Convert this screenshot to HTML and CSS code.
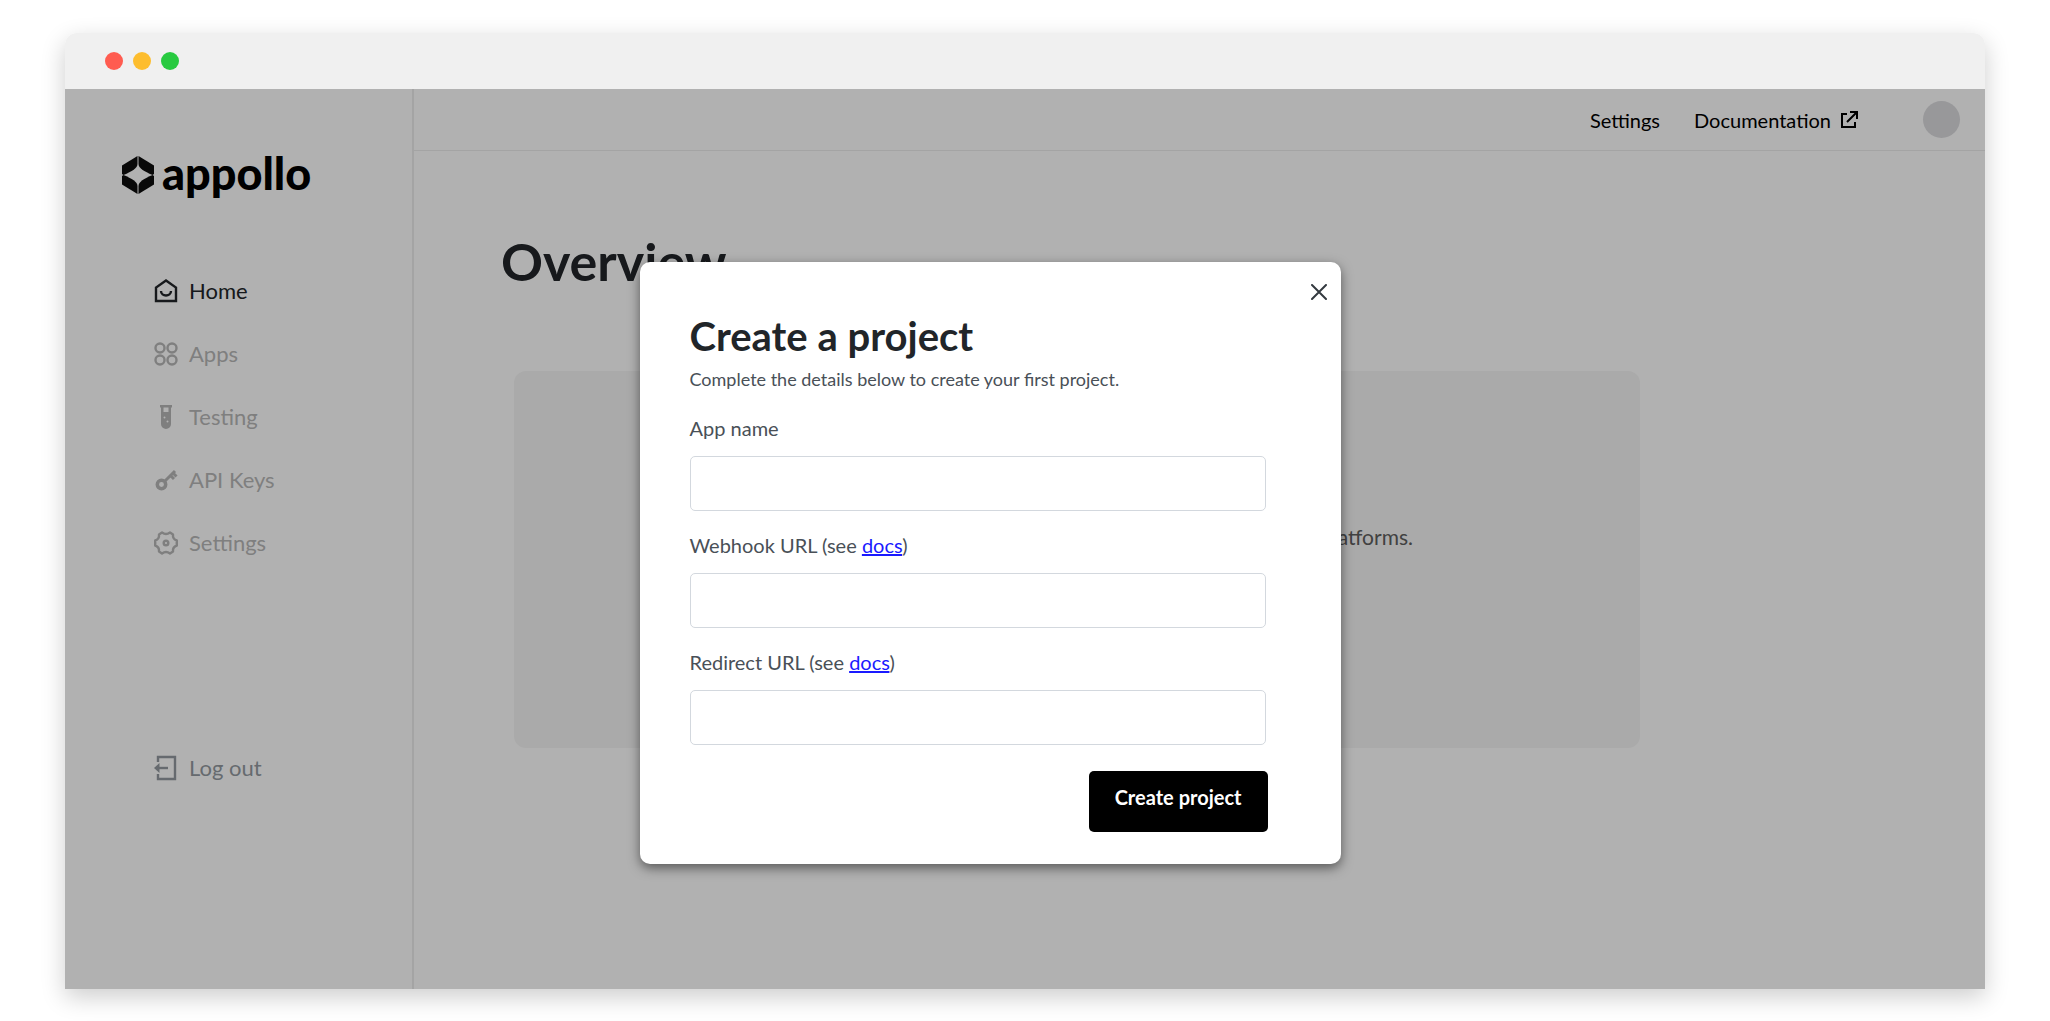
FILE: index.html
```
<!DOCTYPE html>
<html lang="en">
<head>
    <meta charset="UTF-8">
    <meta name="viewport" content="width=device-width, initial-scale=1.0">
    <title>appollo</title>
    <link rel="stylesheet" href="styles.css">
</head>
<body>

<div class="window">
    <div class="titlebar">
        <span class="dot red"></span>
        <span class="dot yellow"></span>
        <span class="dot green"></span>
    </div>

    <div class="app">
        <aside class="sidebar">
            <a href="#" class="logo">
                <svg width="32" height="38" viewBox="0 0 32 38" fill="#0c0c0c">
                    <path d="M15.500 0V8C15.500 12 10 15.500 1.500 19L0 18V9.500Z"/>
                    <path d="M16.500 0V8C16.500 12 22 15.500 30.500 19L32 18V9.500Z"/>
                    <path d="M15.500 38V30C15.500 26 10 22.500 1.500 19L0 20V28.500Z"/>
                    <path d="M16.500 38V30C16.500 26 22 22.500 30.500 19L32 20V28.500Z"/>
                </svg>
                <span>appollo</span>
            </a>

            <nav class="nav">
                <a href="#" class="active">
                    <svg width="24" height="24" viewBox="0 0 24 24" fill="none" stroke="currentColor" stroke-width="2.400">
                        <path d="M2 22V8.500L12 1.500L22 8.500V22Z"/>
                        <path d="M7 12C7 18 17 18 17 12"/>
                    </svg>
                    Home
                </a>
                <a href="#">
                    <svg width="24" height="24" viewBox="0 0 24 24" fill="none" stroke="currentColor" stroke-width="2.400">
                        <circle cx="6" cy="6" r="4.500"/>
                        <circle cx="18" cy="6" r="4.500"/>
                        <circle cx="6" cy="18" r="4.500"/>
                        <circle cx="18" cy="18" r="4.500"/>
                    </svg>
                    Apps
                </a>
                <a href="#">
                    <svg width="24" height="24" viewBox="0 0 24 24" fill="currentColor">
                        <path fill-rule="evenodd" d="M6 0H18V2.500H17V19A5 5 0 0 1 7 19V2.500H6ZM9.500 2.500V7H14.500V2.500Z"/>
                        <g fill="#fff">
                            <circle cx="10.500" cy="12.500" r="1"/>
                            <circle cx="13.500" cy="16.500" r="1"/>
                        </g>
                    </svg>
                    Testing
                </a>
                <a href="#">
                    <svg width="24" height="24" viewBox="0 0 24 24" fill="none" stroke="currentColor">
                        <circle cx="7.500" cy="16.500" r="4.200" stroke-width="3.500"/>
                        <path d="M10.500 13.500L21 3M16 7L20 11M18.500 4.500L22.500 8.500" stroke-width="3"/>
                    </svg>
                    API Keys
                </a>
                <a href="#">
                    <svg width="24" height="24" viewBox="0 0 24 24" fill="none" stroke="currentColor" stroke-width="2.400" stroke-linejoin="round">
                        <path d="M8 1.500Q12 4.500 16 1.500L19 3.500Q18.500 8 22.800 9.500V14.500Q18.500 16 19 20.500L16 22.500Q12 19.500 8 22.500L5 20.500Q5.500 16 1.200 14.500V9.500Q5.500 8 5 3.500Z"/>
                        <circle cx="12" cy="12" r="2.300"/>
                    </svg>
                    Settings
                </a>
                <a href="#" class="logout">
                    <svg width="24" height="26" viewBox="0 0 24 26" fill="none" stroke="currentColor" stroke-width="2.400">
                        <path d="M4 7V2H21V24H4V19"/>
                        <path d="M5 13H14"/>
                        <path d="M0 13L5.500 8V18Z" fill="currentColor" stroke="none"/>
                    </svg>
                    Log out
                </a>
            </nav>
        </aside>

        <div class="content">
            <header>
                <a href="#">Settings</a>
                <a href="#" class="docs-link">
                    Documentation
                    <svg width="18" height="18" viewBox="0 0 18 18" fill="none" stroke="currentColor" stroke-width="2">
                        <path d="M7 3H2V16H15V11"/>
                        <path d="M10 1H17V8M17 1L7 11"/>
                    </svg>
                </a>
                <span class="avatar"></span>
            </header>

            <main>
                <h1>Overview</h1>
                <section class="panel">
                    <p>platforms.</p>
                </section>
            </main>
        </div>

        <!-- Create project modal -->
        <div class="overlay">
            <div class="modal" role="dialog" aria-labelledby="modalTitle">
                <button type="button" class="close" aria-label="Close">
                    <svg width="16" height="16" viewBox="0 0 16 16" fill="none" stroke="currentColor" stroke-width="2" stroke-linecap="round">
                        <path d="M1 1L15 15M15 1L1 15"/>
                    </svg>
                </button>
                <h2 id="modalTitle">Create a project</h2>
                <p class="subtitle">Complete the details below to create your first project.</p>
                <form>
                    <div class="field">
                        <label for="appName">App name</label>
                        <input type="text" id="appName">
                    </div>
                    <div class="field">
                        <label for="webhookUrl">Webhook URL (see <a href="#">docs</a>)</label>
                        <input type="text" id="webhookUrl">
                    </div>
                    <div class="field">
                        <label for="redirectUrl">Redirect URL (see <a href="#">docs</a>)</label>
                        <input type="text" id="redirectUrl">
                    </div>
                    <button type="button" class="create-button">Create project</button>
                </form>
            </div>
        </div>
    </div>
</div>

</body>
</html>
```
FILE: styles.css
```
* {
    box-sizing: border-box;
}

body {
    font-family: Lato, "Liberation Sans", sans-serif;
    margin: 0;
    padding: 33px 65px 32px;
    background-color: white;
    color: #212529;
}

h1, h2, p {
    margin: 0;
}

a {
    color: inherit;
    text-decoration: none;
}

svg {
    flex-shrink: 0;
}

/* Browser window */
.window {
    display: flex;
    flex-direction: column;
    min-height: calc(100vh - 65px);
    border-radius: 12px 12px 0 0;
    box-shadow: 0 8px 24px rgba(0, 0, 0, 0.2);
}

.titlebar {
    display: flex;
    align-items: center;
    gap: 10px;
    height: 56px;
    padding: 0 40px;
    background-color: #f0f0f0;
    border-radius: 12px 12px 0 0;
}

.dot {
    width: 18px;
    height: 18px;
    border-radius: 50%;
}

.red {
    background-color: #ff5c50;
}

.yellow {
    background-color: #fdbd2e;
}

.green {
    background-color: #28ca40;
}

.app {
    position: relative;
    display: flex;
    flex: 1;
    background-color: #fefefe;
}

/* Sidebar */
.sidebar {
    width: 349px;
    border-right: 2px solid #ebebeb;
    padding-top: 60px;
}

.logo {
    display: flex;
    align-items: center;
    gap: 8px;
    height: 52px;
    padding-left: 57px;
    color: #000;
    font-size: 45px;
    font-weight: 900;
    line-height: 48px;
}

.logo span {
    padding-bottom: 4px;
}

.nav {
    display: flex;
    flex-direction: column;
    gap: 32px;
    padding: 74px 0 0 89px;
}

.nav a {
    display: flex;
    align-items: center;
    gap: 11px;
    height: 31px;
    font-size: 22px;
    color: #b6b6b6;
}

.nav .active {
    color: #212529;
}

.nav .logout {
    margin-top: 162px;
    color: #93999f;
}

/* Main area */
.content {
    flex: 1;
}

header {
    display: flex;
    align-items: center;
    justify-content: flex-end;
    gap: 34px;
    height: 62px;
    padding-right: 25px;
    border-bottom: 1px solid #ebebeb;
    color: #000;
    font-size: 20px;
}

.docs-link {
    display: flex;
    align-items: center;
    gap: 9px;
    margin-right: 31px;
}

.avatar {
    width: 37px;
    height: 37px;
    border-radius: 50%;
    background-color: #dadadd;
}

main {
    padding: 79px 345px 0 87px;
}

h1 {
    font-size: 52px;
    line-height: 62px;
}

.panel {
    height: 377px;
    margin: 79px 0 0 13px;
    padding: 153px 227px 0;
    border-radius: 12px;
    background-color: #f4f4f4;
}

.panel p {
    font-size: 21px;
    line-height: 26px;
    text-align: right;
    color: #5d5d5d;
}

/* Modal */
.overlay {
    position: absolute;
    inset: 0;
    display: flex;
    justify-content: center;
    align-items: flex-start;
    padding: 173px 70px 0 0;
    background-color: rgba(0, 0, 0, 0.3);
}

.modal {
    position: relative;
    width: 701px;
    padding: 50px 75px 32px 50px;
    border-radius: 10px;
    background-color: #fff;
    box-shadow: 0 4px 12px rgba(0, 0, 0, 0.5);
}

.close {
    position: absolute;
    top: 16px;
    right: 8px;
    display: flex;
    padding: 6px;
    border: none;
    background: none;
    color: #343a40;
    cursor: pointer;
}

h2 {
    font-size: 40px;
    line-height: 48px;
}

.subtitle {
    margin-bottom: 18px;
    color: #495057;
    font-size: 18px;
    line-height: 38px;
}

.field {
    margin-bottom: 22px;
}

.field label {
    display: block;
    margin-bottom: 15px;
    color: #495057;
    font-size: 20px;
    line-height: 25px;
}

.field label a {
    color: #1a1aff;
    text-decoration: underline;
}

.field input {
    display: block;
    width: 100%;
    height: 55px;
    padding: 0 16px;
    border: 1px solid #d3d8de;
    border-radius: 5px;
    background-color: #fff;
    font: inherit;
    font-size: 20px;
}

.create-button {
    display: block;
    margin: 26px -2px 0 auto;
    padding: 14px 26px 22px;
    border: none;
    border-radius: 5px;
    background-color: #000;
    color: #fff;
    font-family: inherit;
    font-size: 20px;
    font-weight: bold;
    line-height: 25px;
    cursor: pointer;
}
```
